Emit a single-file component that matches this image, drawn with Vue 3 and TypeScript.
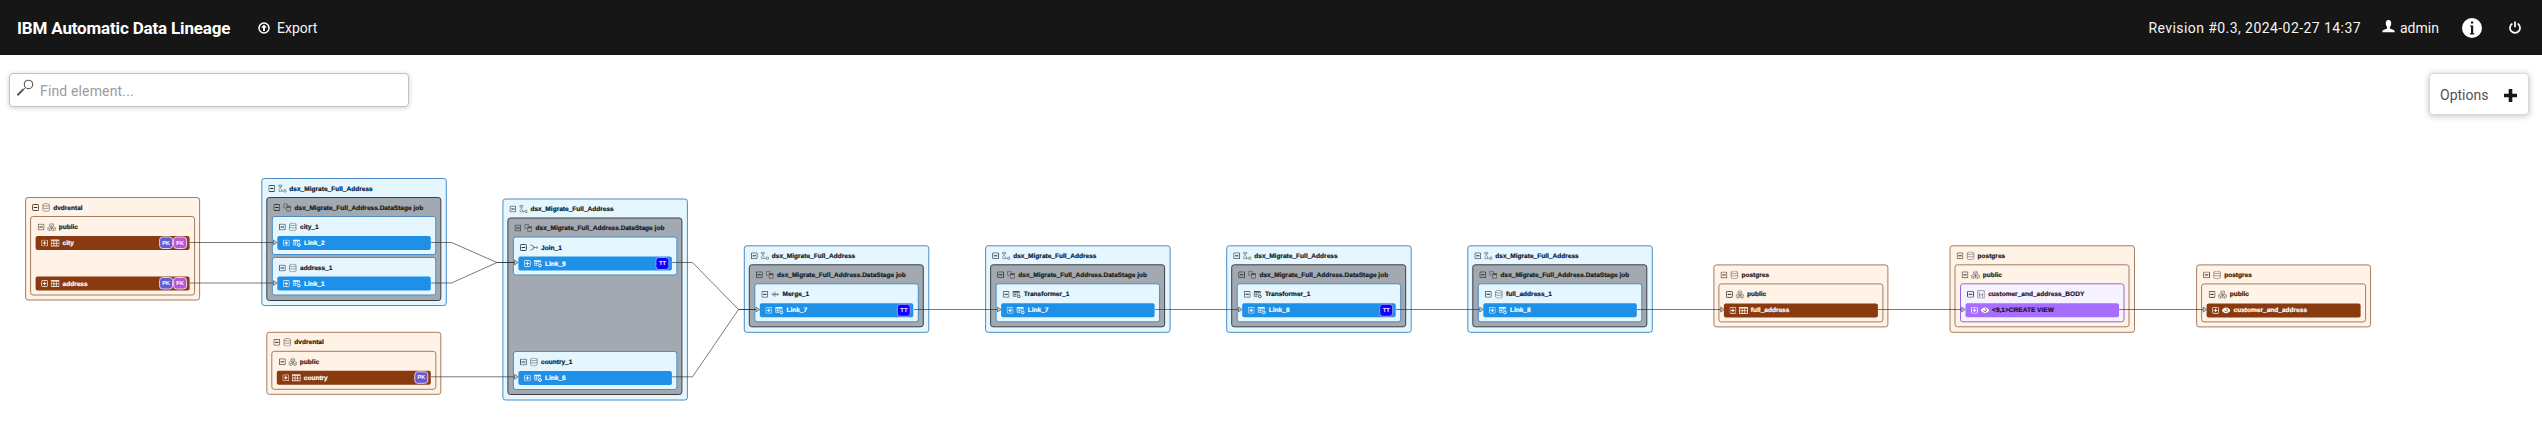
<script setup lang="ts">
type Tone = 'sand' | 'sky' | 'steel' | 'violet'

interface Badge {
  text: string
  kind: 'pk' | 'fk' | 'tt'
}
interface Row {
  label: string
  icon: string
  fill: 'rust' | 'azure' | 'grape'
  badges?: Badge[]
}
interface Group {
  label: string
  icon: string
  tone: Tone
  rows: Row[]
}
interface Frame {
  label: string
  icon: string
  tone: Tone
}
interface LineageNode {
  id: string
  x: number
  y: number
  outer: Frame
  middle?: Frame
  groups: Group[]
  gap?: 'wide'
}

// Nodes are laid out at double size and zoomed out to fit the viewport.
const zoom = 0.5

const PK: Badge = { text: 'PK', kind: 'pk' }
const FK: Badge = { text: 'FK', kind: 'fk' }
const TT: Badge = { text: 'TT', kind: 'tt' }

const job: Frame = { label: 'dsx_Migrate_Full_Address', icon: 'flow', tone: 'sky' }
const stage: Frame = { label: 'dsx_Migrate_Full_Address.DataStage job', icon: 'copy', tone: 'steel' }
const db = (label: string): Frame => ({ label, icon: 'db', tone: 'sand' })
const schema: Frame = { label: 'public', icon: 'cubes', tone: 'sand' }

const link = (label: string, badges: Badge[] = []): Row => ({ label, icon: 'tablegear', fill: 'azure', badges })
const table = (label: string, badges: Badge[] = []): Row => ({ label, icon: 'table', fill: 'rust', badges })
const step = (label: string, icon: string, row: Row): Group => ({ label, icon, tone: 'sky', rows: [row] })

const nodes: LineageNode[] = [
  { id: 'src', x: 25.1, y: 197, outer: db('dvdrental'), groups: [{ ...schema, rows: [table('city', [PK, FK]), table('address', [PK, FK])] }] },
  { id: 'load', x: 261.3, y: 178, outer: job, middle: stage, groups: [step('city_1', 'db', link('Link_2')), step('address_1', 'db', link('Link_1'))] },
  { id: 'country', x: 266.3, y: 331.8, outer: db('dvdrental'), groups: [{ ...schema, rows: [table('country', [PK])] }] },
  { id: 'join', x: 502.4, y: 198.5, outer: job, middle: stage, gap: 'wide', groups: [step('Join_1', 'join', link('Link_9', [TT])), step('country_1', 'db', link('Link_6'))] },
  { id: 'merge', x: 743.8, y: 245.3, outer: job, middle: stage, groups: [step('Merge_1', 'merge', link('Link_7', [TT]))] },
  { id: 'tr1', x: 985.1, y: 245.3, outer: job, middle: stage, groups: [step('Transformer_1', 'tablegear', link('Link_7'))] },
  { id: 'tr2', x: 1226.2, y: 245.3, outer: job, middle: stage, groups: [step('Transformer_1', 'tablegear', link('Link_8', [TT]))] },
  { id: 'full', x: 1467.3, y: 245.3, outer: job, middle: stage, groups: [step('full_address_1', 'db', link('Link_8'))] },
  { id: 'pg', x: 1713.4, y: 264.4, outer: db('postgres'), groups: [{ ...schema, rows: [table('full_address')] }] },
  {
    id: 'view', x: 1949.5, y: 245.3, outer: db('postgres'), middle: schema,
    groups: [{ label: 'customer_and_address_BODY', icon: 'script', tone: 'violet', rows: [{ label: '<9,1>CREATE VIEW', icon: 'eye', fill: 'grape' }] }],
  },
  { id: 'out', x: 2196.1, y: 264.4, outer: db('postgres'), groups: [{ ...schema, rows: [{ label: 'customer_and_address', icon: 'eye', fill: 'rust' }] }] },
]

const edges: string[] = [
  'M190 242.5H273.5',
  'M190 283H273.5',
  'M431 242.5H451.5L497 262.5H515',
  'M431 283H451.5L497 262.5H515',
  'M431 376.8H515',
  'M672 262.5H692.5L738.5 309.5H756',
  'M672 376.8H692.5L738.5 309.5H756',
  'M914 309.5H998',
  'M1155 309.5H1239',
  'M1396 309.5H1480',
  'M1637 309.5H1721',
  'M1878 309.5H1962',
  'M2119 309.5H2203.5',
]
const arrows: [number, number][] = [
  [273.5, 242.5], [273.5, 283], [514.5, 262.5], [514.5, 376.8], [756, 309.5],
  [997.5, 309.5], [1238.5, 309.5], [1479.7, 309.5], [1720.7, 309.5], [1961.7, 309.5], [2203.2, 309.5],
]
</script>

<template>
  <div class="app">
    <svg class="sprite" aria-hidden="true">
      <symbol id="minus" viewBox="0 0 7 7">
        <rect x=".5" y=".5" width="6" height="6" rx=".8" fill="none" stroke="currentColor" stroke-width=".75" />
        <path d="M1.8 3.5H5.2" stroke="currentColor" stroke-width=".9" />
      </symbol>
      <symbol id="plus" viewBox="0 0 7 7">
        <rect x=".5" y=".5" width="6" height="6" rx=".8" fill="none" stroke="currentColor" stroke-width=".75" />
        <path d="M1.8 3.5H5.2M3.5 1.8V5.2" stroke="currentColor" stroke-width="1" />
      </symbol>
      <symbol id="db" viewBox="0 0 9 9">
        <path d="M1.2 2C1.2 .2 7.8 .2 7.8 2V7C7.8 8.8 1.2 8.8 1.2 7ZM1.2 2.4C2.5 3.4 6.5 3.4 7.8 2.4M1.2 4.8C2.5 5.8 6.5 5.8 7.8 4.8" fill="none" stroke="currentColor" stroke-width=".5" />
      </symbol>
      <symbol id="cubes" viewBox="0 0 9 9">
        <path d="M4.5 .6L6.4 1.7V3.8L4.5 4.9L2.6 3.8V1.7ZM2.4 4.2L4.4 5.3V7.3L2.4 8.4L.5 7.3V5.3ZM6.6 4.2L8.5 5.3V7.3L6.6 8.4L4.6 7.3V5.3ZM2.7 1.8L4.5 2.8L6.3 1.8M4.5 2.8V4.8M.6 5.4L2.4 6.4L4.4 5.4M2.4 6.4V8.3M4.7 5.4L6.6 6.4L8.4 5.4M6.6 6.4V8.3" fill="none" stroke="currentColor" stroke-width=".45" />
      </symbol>
      <symbol id="flow" viewBox="0 0 9 9">
        <path d="M1 1H4V2.5H1ZM2.5 2.5V4L1.2 5.2V7.4H3.8V5.2L2.5 4M3.8 7H6M6.2 5.8H8.2V8H6.2Z" fill="none" stroke="currentColor" stroke-width=".5" />
      </symbol>
      <symbol id="copy" viewBox="0 0 9 9">
        <path d="M1 1H4.5V2.5M1 1V5H3" fill="none" stroke="currentColor" stroke-width=".6" />
        <path d="M3.8 3.2H7.8V8H3.8Z" fill="none" stroke="currentColor" stroke-width=".6" />
        <path d="M3.8 3.2H7.8V4.8H3.8Z" fill="currentColor" />
      </symbol>
      <symbol id="join" viewBox="0 0 9 9">
        <path d="M.5 2H2L4.2 4.5H8.3M.5 7H2L4.2 4.5M3 2L5.2 4.5L3 7M6.8 3L8.3 4.5L6.8 6" fill="none" stroke="currentColor" stroke-width=".55" />
      </symbol>
      <symbol id="merge" viewBox="0 0 9 9">
        <path d="M.5 4.5H8.5M2 2.8L3.5 4.5L2 6.2M4.2 2V7M7 3L5.5 4.5L7 6" fill="none" stroke="currentColor" stroke-width=".6" />
      </symbol>
      <symbol id="table" viewBox="0 0 9 9">
        <rect x=".4" y="1.5" width="8.2" height="6" fill="none" stroke="currentColor" stroke-width=".8" />
        <path d="M.5 2.2H8.5M.5 4.8H8.5M3.3 2V7.5M5.8 2V7.5" stroke="currentColor" stroke-width=".7" />
      </symbol>
      <symbol id="tablegear" viewBox="0 0 9 9">
        <path d="M.8 1.2H7.4V2.8H.8Z" fill="currentColor" />
        <path d="M.9 1.5V6.6H4.2M.9 4.6H5M3 2V6.6M5.1 2V4.4M7.3 2V4" fill="none" stroke="currentColor" stroke-width=".6" />
        <circle cx="6.6" cy="6.5" r="1.4" fill="none" stroke="currentColor" stroke-width="1" />
      </symbol>
      <symbol id="script" viewBox="0 0 9 9">
        <path d="M1.2 .8H7.8V8.2H1.2ZM3 2.5V7M3 5H6M6 3.5V7" fill="none" stroke="currentColor" stroke-width=".5" />
      </symbol>
      <symbol id="eye" viewBox="0 0 9 9">
        <path d="M.3 4.5C2.3 .8 6.7 .8 8.7 4.5C6.7 8.2 2.3 8.2 .3 4.5Z" fill="currentColor" />
        <path class="iris" d="M4.5 2.8A1.5 1.5 0 1 1 3 4.3" fill="none" stroke-width=".7" />
      </symbol>
    </svg>

    <header class="bar">
      <h1 class="brand">IBM Automatic Data Lineage</h1>
      <a class="export">
        <svg width="12" height="12" viewBox="0 0 12 12">
          <circle cx="6" cy="6" r="5" fill="none" stroke="#fff" stroke-width="1.5" />
          <path d="M6 2.6L9 5.8H7V9H5V5.8H3Z" fill="#fff" />
        </svg>
        <span>Export</span>
      </a>
      <span class="revision">Revision #0.3, 2024-02-27 14:37</span>
      <span class="user">
        <svg width="13" height="13" viewBox="0 0 13 13">
          <path d="M6.5 0C8.5 0 9.4 1.5 9.2 3.7C9.1 5.1 8.5 6.3 7.9 7.1V8.5L11.6 10C12.4 10.4 12.7 11 12.8 12.2H.2C.3 11 .6 10.4 1.4 10L5.1 8.5V7.1C4.5 6.3 3.9 5.1 3.8 3.7C3.6 1.5 4.5 0 6.5 0Z" fill="#fff" />
        </svg>
        <span>admin</span>
      </span>
      <svg class="info" width="20" height="20" viewBox="0 0 20 20">
        <circle cx="10" cy="10" r="10" fill="#fff" />
        <path d="M9 3.4H11.2V5.6H9ZM8 7.4H11.2V15.2H12.2V16.6H8V15.2H9V8.6H8Z" fill="#161616" />
      </svg>
      <svg class="power" width="12" height="13" viewBox="0 0 12 13">
        <path d="M3.4 2.6A5 5 0 1 0 8.6 2.6" fill="none" stroke="#fff" stroke-width="1.7" />
        <path d="M6 .5V6.2" stroke="#fff" stroke-width="1.7" />
      </svg>
    </header>

    <div class="tools">
      <label class="search">
        <svg width="18" height="18" viewBox="0 0 18 18">
          <circle cx="12.5" cy="5.4" r="4.2" fill="none" stroke="#555" stroke-width="1.1" />
          <path d="M9.4 8.6L7.4 10.4" stroke="#555" stroke-width="1" />
          <path d="M7.6 10.1L1.4 16.2" stroke="#555" stroke-width="2" />
        </svg>
        <span>Find element...</span>
      </label>
      <div class="options">
        <span>Options</span>
        <svg width="13" height="13" viewBox="0 0 13 13"><path d="M0 6.5H13M6.5 0V13" stroke="#161616" stroke-width="3.6" /></svg>
      </div>
    </div>

    <div class="canvas">
      <section
        v-for="n in nodes"
        :key="n.id"
        class="node box"
        :class="n.outer.tone"
        :style="{ transform: `translate(${n.x}px, ${n.y}px) scale(${zoom})` }"
      >
        <div class="head">
          <svg class="toggle"><use href="#minus" /></svg>
          <svg class="glyph"><use :href="'#' + n.outer.icon" /></svg>
          <span>{{ n.outer.label }}</span>
        </div>
        <div :class="n.middle ? ['box', n.middle.tone] : 'plain'">
          <div v-if="n.middle" class="head">
            <svg class="toggle"><use href="#minus" /></svg>
            <svg class="glyph"><use :href="'#' + n.middle.icon" /></svg>
            <span>{{ n.middle.label }}</span>
          </div>
          <div class="groups" :class="n.gap">
            <div v-for="g in n.groups" :key="g.label" class="box inner" :class="g.tone">
              <div class="head">
                <svg class="toggle"><use href="#minus" /></svg>
                <svg class="glyph"><use :href="'#' + g.icon" /></svg>
                <span>{{ g.label }}</span>
              </div>
              <div class="rows">
                <div v-for="r in g.rows" :key="r.label" class="row" :class="r.fill">
                  <svg class="toggle"><use href="#plus" /></svg>
                  <svg class="glyph"><use :href="'#' + r.icon" /></svg>
                  <span class="name">{{ r.label }}</span>
                  <span v-for="b in r.badges" :key="b.text" class="badge" :class="b.kind">{{ b.text }}</span>
                </div>
              </div>
            </div>
          </div>
        </div>
      </section>

      <svg class="edges" width="2542" height="438" viewBox="0 0 2542 438">
        <path v-for="d in edges" :key="d" :d="d" fill="none" stroke="#222" stroke-opacity=".6" stroke-width="1" />
        <path
          v-for="[x, y] in arrows"
          :key="x + '-' + y"
          :d="`M${x} ${y - 2.4}L${x + 3.6} ${y}L${x} ${y + 2.4}Z`"
          fill="#ccc"
          stroke="#555"
          stroke-width=".7"
        />
      </svg>
    </div>
  </div>
</template>

<style>
body {
  background: #fff;
}
</style>

<style scoped>
.app {
  position: relative;
  width: 2542px;
  height: 438px;
  overflow: hidden;
  font-family: Roboto, 'Noto Sans', sans-serif;
}
.sprite {
  position: absolute;
  width: 0;
  height: 0;
}
.bar {
  display: flex;
  align-items: center;
  box-sizing: border-box;
  height: 55px;
  padding: 0 21px 0 17px;
  background: #161616;
  color: #f4f4f4;
  font-size: 14px;
}
.brand {
  margin: 0;
  width: 241px;
  font-size: 17px;
  font-weight: 700;
  letter-spacing: -0.17px;
  white-space: nowrap;
  color: #fff;
}
.export {
  display: flex;
  align-items: center;
  gap: 7px;
  margin-right: auto;
  padding-top: 1px;
}
.revision {
  padding-top: 1px;
  margin-right: 21px;
  letter-spacing: 0.43px;
  white-space: nowrap;
}
.user {
  display: flex;
  align-items: center;
  gap: 5px;
  width: 80px;
}
.user svg {
  margin-top: -3px;
}
.user span {
  padding-top: 1px;
}
.info {
  margin-right: 27px;
}
.tools {
  display: flex;
  justify-content: space-between;
  align-items: flex-start;
  padding: 18px 13px 0 9px;
}
.search {
  display: flex;
  align-items: center;
  box-sizing: border-box;
  width: 400px;
  height: 34px;
  padding: 0 6px 2px;
  gap: 6px;
  border: 1px solid #c2c2c2;
  border-radius: 4px;
  box-shadow: 0 1px 5px rgba(0, 0, 0, 0.2);
  background: #fff;
  color: #9c9c9c;
  font-size: 14px;
  letter-spacing: 0.15px;
}
.search svg {
  margin-top: -2px;
}
.search span {
  padding-top: 3px;
}
.options {
  display: flex;
  align-items: center;
  justify-content: space-between;
  box-sizing: border-box;
  width: 100px;
  height: 42px;
  padding: 2px 11px 0 10px;
  border: 1px solid #d8d8d8;
  border-radius: 4px;
  box-shadow: 0 1px 6px rgba(0, 0, 0, 0.25);
  background: #fff;
  color: #525252;
  font-size: 14px;
}
.canvas {
  position: absolute;
  inset: 0;
  pointer-events: none;
  font-family: 'Liberation Sans', Arial, sans-serif;
  font-size: 13.1px;
  font-weight: 700;
  line-height: 16px;
  text-rendering: geometricPrecision;
  -webkit-text-stroke: 0.35px currentColor;
}
.node {
  position: absolute;
  top: 0;
  left: 0;
  transform-origin: 0 0;
}
.box {
  box-sizing: border-box;
  padding: 0 8.3px 8.4px;
  border: 2px solid;
  border-radius: 6px;
}
.head {
  display: flex;
  align-items: center;
  box-sizing: border-box;
  height: 36.2px;
  padding: 2px 0 0 3.4px;
  white-space: nowrap;
}
.inner > .head {
  height: 37.4px;
}
.inner {
  width: 329.6px;
  padding: 0 9px 8px;
}
.sand {
  background: #fff2e6;
  border-color: #a37c62;
  color: #2b1206;
}
.sky {
  background: #e5f6ff;
  border-color: #4a8cc4;
  color: #03182b;
}
.steel {
  background: #a2a9b0;
  border-color: #3c4044;
  color: #161616;
}
.violet {
  background: #f6f2ff;
  border-color: #9467d8;
  color: #1c0f30;
}
.toggle {
  flex: none;
  width: 14px;
  height: 14px;
}
.glyph {
  flex: none;
  width: 18px;
  height: 18px;
  margin: 0 5.4px 0 5px;
}
.head .glyph {
  color: #4b4b4b;
}
.groups {
  display: grid;
  gap: 4.2px;
}
.groups.wide {
  gap: 151.6px;
}
.rows {
  display: grid;
  gap: 53px;
}
.row {
  display: flex;
  align-items: center;
  box-sizing: border-box;
  height: 28px;
  padding: 0 5px 0 11.2px;
  border-radius: 4px;
  color: #fff;
}
.name {
  flex: 1;
}
.rust {
  background: #8a3a0f;
}
.azure {
  background: #1e90e8;
}
.grape {
  background: #a56eff;
  color: #1c0f30;
}
.grape svg {
  color: #fff;
}
.iris {
  stroke: #8a3a0f;
}
.badge {
  box-sizing: border-box;
  width: 28px;
  height: 25.5px;
  border: 2px solid #d8d0f5;
  border-radius: 7px;
  font-size: 11.6px;
  font-weight: 400;
  line-height: 22.5px;
  text-align: center;
}
.pk {
  background: #6a5acd;
}
.fk {
  background: #ba55d3;
  border-color: #eccdf3;
}
.tt {
  background: #1400ff;
  border-color: #8f9cf5;
}
.edges {
  position: absolute;
  inset: 0;
}
</style>
